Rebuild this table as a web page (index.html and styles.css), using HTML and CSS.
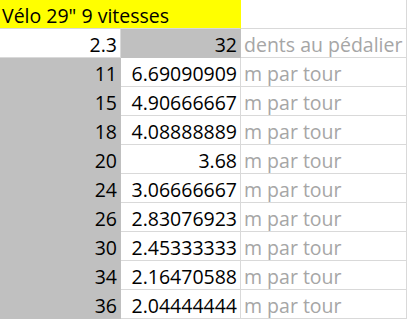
FILE: index.html
```html
<!DOCTYPE html>
<html lang="fr">
<head>
<meta charset="utf-8">
<title>Vélo 29" 9 vitesses</title>
<link rel="stylesheet" href="styles.css">
</head>
<body>
<div class="sheet">
  <div class="cell title span2">Vélo 29" 9 vitesses</div>
  <div class="cell"></div>

  <div class="cell num">2.3</div>
  <div class="cell num gray">32</div>
  <div class="cell label">dents au pédalier</div>

  <div class="cell num gray">11</div><div class="cell num">6.69090909</div><div class="cell label">m par tour</div>
  <div class="cell num gray">15</div><div class="cell num">4.90666667</div><div class="cell label">m par tour</div>
  <div class="cell num gray">18</div><div class="cell num">4.08888889</div><div class="cell label">m par tour</div>
  <div class="cell num gray">20</div><div class="cell num">3.68</div><div class="cell label">m par tour</div>
  <div class="cell num gray">24</div><div class="cell num">3.06666667</div><div class="cell label">m par tour</div>
  <div class="cell num gray">26</div><div class="cell num">2.83076923</div><div class="cell label">m par tour</div>
  <div class="cell num gray">30</div><div class="cell num">2.45333333</div><div class="cell label">m par tour</div>
  <div class="cell num gray">34</div><div class="cell num">2.16470588</div><div class="cell label">m par tour</div>
  <div class="cell num gray">36</div><div class="cell num">2.04444444</div><div class="cell label">m par tour</div>
</div>
</body>
</html>
```

FILE: styles.css
```css
html, body {
  margin: 0;
  padding: 0;
  background: #ffffff;
}

.sheet {
  display: grid;
  grid-template-columns: 121px 120px 166px;
  grid-auto-rows: 29px;
  font-family: "Open Sans", "Noto Sans", sans-serif;
  font-size: 19.5px;
  color: #000000;
}

.cell {
  box-sizing: border-box;
  border-right: 1px solid #d9d9d9;
  border-bottom: 1px solid #d9d9d9;
  padding: 3px 3px 0 3px;
  line-height: 25px;
  white-space: nowrap;
  overflow: visible;
}

.span2 {
  grid-column: span 2;
}

.title {
  background: #ffff00;
  border-color: #ffff00;
  border-bottom-color: #d9d9d9;
  padding-left: 2px;
}

.num {
  text-align: right;
}

.gray {
  background: #c0c0c0;
  border-color: #c0c0c0;
}

.label {
  color: #a6a6a6;
  padding-left: 3px;
}
```
